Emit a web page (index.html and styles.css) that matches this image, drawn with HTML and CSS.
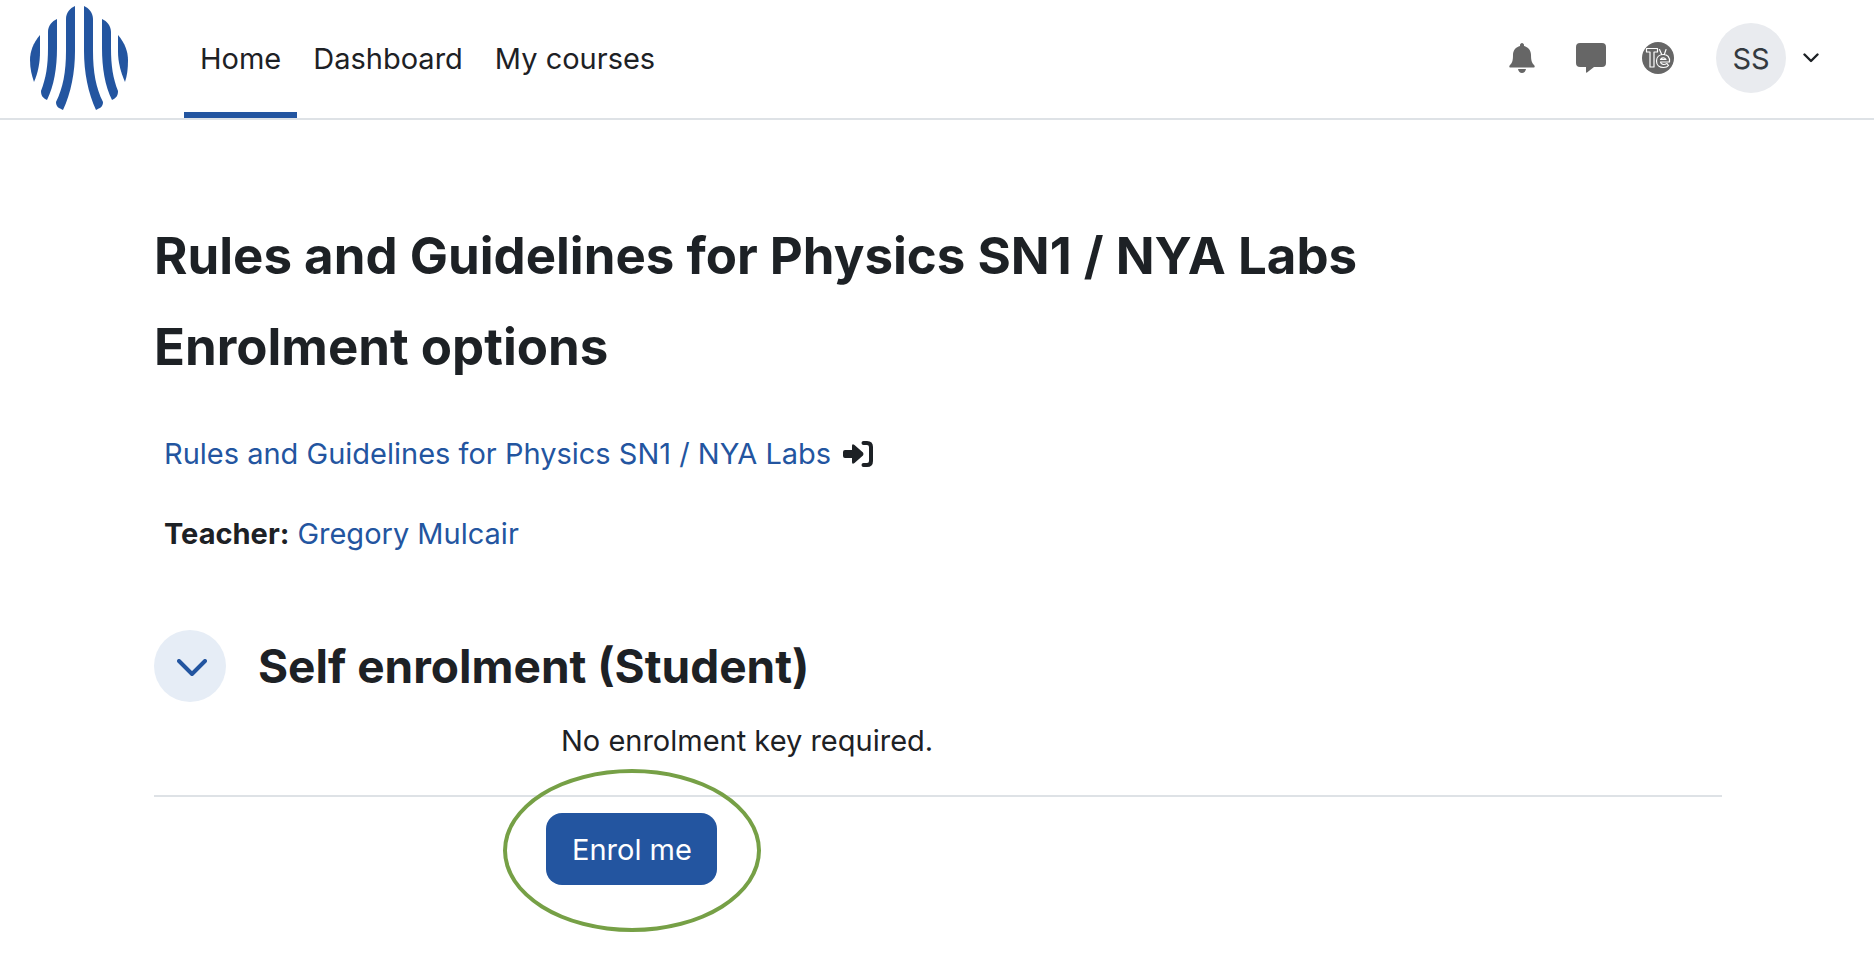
FILE: index.html
```html
<!DOCTYPE html>
<html lang="en">
<head>
    <meta charset="UTF-8">
    <title>Enrolment options</title>
    <link rel="stylesheet" href="styles.css">
</head>
<body>
    <header class="navbar">
        <a href="#" class="logo" aria-label="Site home">
            <svg viewBox="0 0 100 106" width="100" height="106">
                <path d="M10 29C3 37 0 46 0 54C0 63 2 70 4 76C8 67 10 56 10 46Z"/>
                <path d="M27 13C22 15 18 20 18 26V42C18 60 16 72 11 85C11 90 13 92 17 94C24 80 27 62 27 42Z"/>
                <path d="M45 0C40 2 36 7 36 13V45C36 66 33 82 26 96C26 101 29 102 33 104C41 87 45 66 45 45Z"/>
                <path d="M54 0C59 2 63 7 63 13V45C63 66 66 82 73 96C73 101 70 102 66 104C58 87 54 66 54 45Z"/>
                <path d="M72 13C77 15 81 20 81 26V42C81 60 83 72 88 85C88 90 86 92 82 94C75 80 72 62 72 42Z"/>
                <path d="M88 29C95 37 98 46 98 54C98 63 97 70 95 76C91 67 88 56 88 46Z"/>
            </svg>
        </a>
        <nav class="menu">
            <a href="#" class="on">Home</a>
            <a href="#">Dashboard</a>
            <a href="#">My courses</a>
        </nav>
        <div class="tools">
            <button type="button" class="icon-btn bell" aria-label="Notifications">
                <svg viewBox="0 0 26 30" width="26" height="30">
                    <path d="M13 0C12 0 11 1 11 2V3C7 4 4 7 4 12C4 18 3 20 1 22C0 23 0 24.500 1.500 24.500H24.500C26 24.500 26 23 25 22C23 20 22 18 22 12C22 7 19 4 15 3V2C15 1 14 0 13 0ZM9 26C9.500 28.500 11 30 13 30S16.500 28.500 17 26Z"/>
                </svg>
            </button>
            <button type="button" class="icon-btn" aria-label="Messages">
                <svg viewBox="0 0 30 30" width="30" height="30">
                    <path d="M4 0H26Q30 0 30 4V20Q30 24 26 24H18L11 29.500Q10 30 10 29V24H4Q0 24 0 20V4Q0 0 4 0Z"/>
                </svg>
            </button>
            <button type="button" class="icon-btn" aria-label="Text editor">
                <svg viewBox="0 0 32 32" width="32" height="32">
                    <circle cx="16" cy="16" r="16"/>
                    <g fill="none" stroke="#fff" stroke-width="1.200" stroke-linejoin="round" stroke-linecap="round">
                        <path d="M4.500 6.500H15.500V10H12V25H8V10H4.500Z"/>
                        <path d="M17.500 7.500L19.500 12M24 7.500L22.500 12M18.500 20H27.500C28 15 25.500 12.500 21.500 12.500C17 12.500 14.500 15.500 14.500 19C14.500 23 17.500 25.500 21.500 25.500C23.500 25.500 25.500 25 26.500 23.500L25 21.500C22.500 23 19 23 18.500 20ZM18.500 17.500C19.500 15.500 22.500 15 24 17.500Z"/>
                    </g>
                </svg>
            </button>
            <button type="button" class="user">
                <span class="avatar">SS</span>
                <svg viewBox="0 0 16 10" width="16" height="10">
                    <path d="M1.500 1.500L8 8L14.500 1.500"/>
                </svg>
            </button>
        </div>
    </header>

    <main class="page">
        <h1>Rules and Guidelines for Physics SN1 / NYA Labs</h1>
        <h2>Enrolment options</h2>

        <div class="course">
            <p>
                <a href="#">Rules and Guidelines for Physics SN1 / NYA Labs</a>
                <svg viewBox="0 0 30 26" width="30" height="26">
                    <path d="M2 9H9V5Q9 2 11.500 4L20 11.500Q21 13 20 14.500L11.500 22Q9 24 9 21V17H2Q0 17 0 15V11Q0 9 2 9Z"/>
                    <path class="door" d="M20.500 2H24Q28 2 28 6V20Q28 24 24 24H20.500"/>
                </svg>
            </p>
            <p><b>Teacher:</b> <a href="#">Gregory Mulcair</a></p>
        </div>

        <form class="enrol">
            <div class="enrol-head">
                <button type="button" class="toggle" aria-label="Collapse">
                    <svg viewBox="0 0 30 18" width="30" height="18">
                        <path d="M2 2L15 15L28 2"/>
                    </svg>
                </button>
                <h3>Self enrolment (Student)</h3>
            </div>
            <p class="note">No enrolment key required.</p>
            <div class="actions">
                <button type="submit" class="submit">Enrol me</button>
            </div>
        </form>
    </main>
</body>
</html>
```
FILE: styles.css
```css
*{
    margin: 0;
    padding: 0;
    box-sizing: border-box;
}
body{
    font-family: Inter, "Liberation Sans", sans-serif;
    font-size: 29px;
    line-height: 44px;
    color: #1d2125;
    background: #fff;
}
a{
    color: #2355a0;
    text-decoration: none;
}
button{
    font: inherit;
    color: inherit;
    border: 0;
    background: none;
    cursor: pointer;
}
svg{
    display: block;
}

/* top bar */
.navbar{
    display: flex;
    height: 120px;
    padding: 0 55px 0 30px;
    border-bottom: 2px solid #dee2e6;
}
.logo{
    padding-top: 6px;
    margin-right: 54px;
}
.logo svg{
    fill: #2355a0;
}
.menu{
    display: flex;
}
.menu a{
    display: flex;
    align-items: center;
    padding: 6px 16px 0;
    border-bottom: 6px solid transparent;
    color: #1d2125;
}
.menu a.on{
    border-color: #2355a0;
}
.tools{
    display: flex;
    align-items: center;
    margin-left: auto;
    padding-bottom: 2px;
}
.icon-btn{
    margin-right: 36px;
    fill: #666;
}
.bell{
    margin-right: 41px;
}
.user{
    display: flex;
    align-items: center;
    gap: 17px;
    margin-left: 6px;
}
.user svg{
    fill: none;
    stroke: #1d2125;
    stroke-width: 2.4;
    stroke-linecap: round;
    stroke-linejoin: round;
}
.avatar{
    width: 70px;
    height: 70px;
    line-height: 72px;
    border-radius: 50%;
    background: #e9ebef;
    color: #343a40;
    text-align: center;
}

/* content */
.page{
    padding: 104px 152px 0 154px;
}
h1, h2{
    font-size: 51px;
    line-height: 64px;
}
h2{
    margin-top: 27px;
}
.course{
    padding: 53px 10px 0;
}
.course p{
    display: flex;
    align-items: center;
    gap: 8px;
    margin-bottom: 36px;
}
.course p svg{
    margin-left: 4px;
    fill: #1d2125;
}
.course .door{
    fill: none;
    stroke: #1d2125;
    stroke-width: 4;
    stroke-linecap: round;
}
.enrol{
    padding-top: 38px;
}
.enrol-head{
    display: flex;
    align-items: center;
    gap: 32px;
}
.toggle{
    display: flex;
    align-items: center;
    justify-content: center;
    width: 72px;
    height: 72px;
    border-radius: 50%;
    background: #e6edf6;
}
.toggle svg{
    margin: 4px 0 0 4px;
    fill: none;
    stroke: #2355a0;
    stroke-width: 4;
    stroke-linecap: round;
    stroke-linejoin: round;
}
h3{
    font-size: 46px;
    line-height: 56px;
}
.note{
    padding: 17px 0 32px 407px;
    border-bottom: 2px solid #dee2e6;
}
.actions{
    padding: 16px 0 76px 392px;
}
.submit{
    position: relative;
    height: 72px;
    padding: 2px 25px 0 26px;
    border-radius: 16px;
    background: #2355a0;
    color: #fff;
}
/* ring drawn round the button */
.submit::after{
    content: "";
    position: absolute;
    inset: -44px -44px -47px -43px;
    border: 4px solid #76a046;
    border-radius: 50%;
}
```
